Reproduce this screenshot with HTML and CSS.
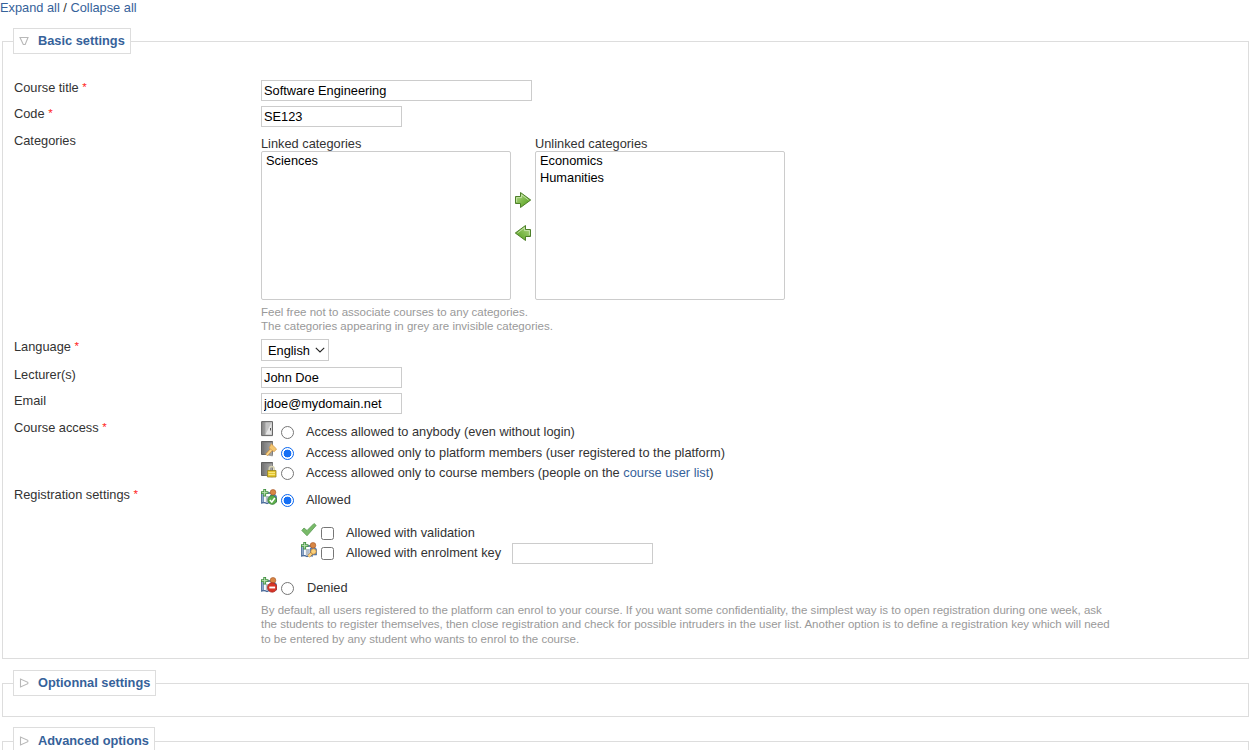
FILE: index.html
```html
<!DOCTYPE html>
<html lang="en">
<head>
<meta charset="utf-8">
<title>Course settings</title>
<link rel="stylesheet" href="styles.css">
</head>
<body>
<svg class="defs" width="0" height="0" aria-hidden="true">
  <defs>
    <linearGradient id="green" x1="0" y1="0" x2="1" y2="1"><stop offset="0" stop-color="#b4d98c"/><stop offset="1" stop-color="#4c9c10"/></linearGradient>
    <linearGradient id="door" x1="0" y1="0" x2="1" y2="0"><stop offset="0" stop-color="#8a8a8a"/><stop offset="1" stop-color="#c4c4c4"/></linearGradient>
    <linearGradient id="cover" x1="0" y1="0" x2="1" y2="0"><stop offset="0" stop-color="#7c7c7c"/><stop offset="1" stop-color="#a8a8a8"/></linearGradient>
    <symbol id="arrow" viewBox="0 0 16 16"><path d="M.5 4.500H5.500V.5L15.700 8 5.500 15.500V11.500H.5z" fill="url(#green)" stroke="#4d7f29"/><path d="M1.600 10V5.600H6.600V2.700L13.500 8" fill="none" stroke="#cfe8b8" stroke-width=".8"/></symbol>
    <symbol id="book" viewBox="0 0 16 16"><path d="M.5.500h11v13H.5z" fill="#777" stroke="#555" stroke-width=".9"/><path d="M2.500 1.200H11.500V15L2.500 13z" fill="url(#cover)" stroke="#777" stroke-width=".5"/></symbol>
    <symbol id="users" viewBox="0 0 16 16"><path d="M.8 4v10q3-1 5.200.5 2-1.500 5-.5V4z" fill="#fff" stroke="#3f6294" stroke-width="1.300"/><path d="M2.300 5.500v7.500" stroke="#7595bf" stroke-width="1.500"/><path d="M4.800 8h3.500M4.800 10h3.500M4.800 12h3.500" stroke="#566c87" stroke-width=".9"/><path d="M9 13V7.500q0-2.300 3-2.300t3.700 2.300V13z" fill="#5680b6" stroke="#385b8c" stroke-width=".5"/><circle cx="12" cy="3.300" r="2.800" fill="#d88643" stroke="#a45427" stroke-width=".6"/><path d="M3.700 0v7.400M0 3.700h7.400" stroke="#3f8f3f" stroke-width="2.800"/><path d="M3.700 .8v5.800M.8 3.700h5.800" stroke="#c2e6b8" stroke-width="1"/></symbol>
  </defs>
</svg>
<div class="toggles"><a>Expand all</a> / <a>Collapse all</a></div>

<fieldset class="panel basic">
  <legend class="legend"><svg class="tri" viewBox="0 0 10 10"><path d="M1 1.500h8L6.200 8.500H4.300z" fill="#fff" stroke="#b8b8b8" stroke-width="1.100"/></svg>Basic settings</legend>
  <div class="row r-title"><label>Course title <b class="req">*</b></label><input class="field wide" value="Software Engineering"></div>
  <div class="row r-code"><label>Code <b class="req">*</b></label><input class="field" value="SE123"></div>
  <div class="row r-cat"><label>Categories</label>
    <div>
      <div class="lists">
        <div><div class="list-title">Linked categories</div><div class="list"><div>Sciences</div></div></div>
        <div class="arrows"><svg class="arrow"><use href="#arrow"/></svg><svg class="arrow left"><use href="#arrow"/></svg></div>
        <div><div class="list-title">Unlinked categories</div><div class="list"><div>Economics</div><div>Humanities</div></div></div>
      </div>
      <div class="help cat-help">Feel free not to associate courses to any categories.<br>The categories appearing in grey are invisible categories.</div>
    </div>
  </div>
  <div class="row r-lang"><label>Language <b class="req">*</b></label>
    <div class="select"><span>English</span><svg width="10" height="6" viewBox="0 0 10 6"><path d="M.8.8 5 5 9.200.8" fill="none" stroke="#222" stroke-width="1.100"/></svg></div></div>
  <div class="row r-lect"><label>Lecturer(s)</label><input class="field" value="John Doe"></div>
  <div class="row r-mail"><label>Email</label><input class="field" value="jdoe@mydomain.net"></div>
  <div class="row r-access"><label>Course access <b class="req">*</b></label>
    <div class="access">
      <div class="opt"><svg class="ico" viewBox="0 0 16 16"><path d="M.6.600h10.900v14H.6z" fill="url(#door)" stroke="#666"/><path d="M4.500 1.500h6v12h-6z" fill="#c4c4c4"/><path d="M10.500 1.500v12h-6z" fill="#e6e6e6"/><path d="M9.500 7v2.500" stroke="#555"/></svg><i class="radio"></i><span>Access allowed to anybody (even without login)</span></div>
      <div class="opt"><svg class="ico" viewBox="0 0 16 16"><use href="#book"/><path d="M5.500 14 11 8" stroke="#c98a35" stroke-width="3.200"/><path d="M5.700 13.800 11 8" stroke="#f8d58b" stroke-width="1.900"/><path d="m10.300 2.800 5.300 5.200-2.500 2.800-5-3.800z" fill="#f4c670" stroke="#cf9548" stroke-width=".7"/></svg><i class="radio on"></i><span>Access allowed only to platform members (user registered to the platform)</span></div>
      <div class="opt"><svg class="ico" viewBox="0 0 16 16"><use href="#book"/><path d="M8.200 9V7q0-2.500 2.500-2.500T13.200 7v2" fill="none" stroke="#d8d3b4" stroke-width="1.500"/><path d="M6.500 8.500h8.500v6.500H6.500z" fill="#e5c62e" stroke="#96811e" stroke-width=".8"/><path d="M7.500 10.500h6.500M7.500 12.500h6.500" stroke="#fbef91" stroke-width=".8"/></svg><i class="radio"></i><span>Access allowed only to course members (people on the <a>course user list</a>)</span></div>
    </div>
  </div>
  <div class="row r-reg"><label>Registration settings <b class="req">*</b></label>
    <div class="reg">
      <div class="opt"><svg class="ico" viewBox="0 0 16 16"><use href="#users"/><circle cx="11.300" cy="11" r="4.400" fill="#5cae4b" stroke="#31792f" stroke-width=".7"/><path d="m8.800 11 2 2 3-4" fill="none" stroke="#fff" stroke-width="1.500"/></svg><i class="radio on"></i><span>Allowed</span></div>
      <div class="suboptions">
        <div class="opt"><svg class="ico" viewBox="0 0 16 16"><path d="m.8 8.500 2.200-2.500 3 2.500L13 1.500l2.200 1.900L6 13.800z" fill="#79ba68" stroke="#5b9a54" stroke-width=".8"/></svg><i class="check"></i><span>Allowed with validation</span></div>
        <div class="opt"><svg class="ico" viewBox="0 0 16 16"><use href="#users"/><path d="m7.500 14.500 4.500-4.500" stroke="#b97824" stroke-width="3"/><path d="m7.500 14.500 4.500-4.500" stroke="#ffd783" stroke-width="1.900"/><circle cx="12.500" cy="9.500" r="2.700" fill="#fbd27e" stroke="#bf8031" stroke-width=".7"/></svg><i class="check"></i><span>Allowed with enrolment key</span><input class="field key" aria-label="Enrolment key"></div>
      </div>
      <div class="opt denied"><svg class="ico" viewBox="0 0 16 16"><use href="#users"/><circle cx="11.200" cy="10.500" r="4.700" fill="#d83527" stroke="#a62620" stroke-width=".7"/><path d="M8.300 10.500h5.800" stroke="#fff" stroke-width="1.900"/></svg><i class="radio"></i><span>Denied</span></div>
      <div class="help reg-help">By default, all users registered to the platform can enrol to your course. If you want some confidentiality, the simplest way is to open registration during one week, ask<br>the students to register themselves, then close registration and check for possible intruders in the user list. Another option is to define a registration key which will need<br>to be entered by any student who wants to enrol to the course.</div>
    </div>
  </div>
</fieldset>

<fieldset class="panel optional">
  <legend class="legend"><svg class="tri" viewBox="0 0 10 10"><path d="M1.500 1v8L8.800 5.700V4.300z" fill="#fff" stroke="#b8b8b8" stroke-width="1.100"/></svg>Optionnal settings</legend>
</fieldset>
<fieldset class="panel advanced">
  <legend class="legend"><svg class="tri" viewBox="0 0 10 10"><path d="M1.500 1v8L8.800 5.700V4.300z" fill="#fff" stroke="#b8b8b8" stroke-width="1.100"/></svg>Advanced options</legend>
</fieldset>
</body>
</html>
```
FILE: styles.css
```css
* { box-sizing: border-box; }
html { overflow: hidden; }
body { margin: 0; height: 750px; overflow: hidden; background: #fff; color: #333; font: 12.800px/16px "Liberation Sans", Arial, sans-serif; }
.defs { display: block; }
a { color: #36629a; }
.toggles { height: 28px; white-space: nowrap; }
.panel { margin: 0 2px; padding: 0 11px; border: 1px solid #ddd; min-width: 0; }
.basic { height: 631px; padding-top: 26px; }
.optional { height: 47px; margin-top: 11px; }
.advanced { height: 60px; margin-top: 10px; }
.legend { display: flex; align-items: center; height: 26px; margin-left: -1px; padding: 0 5px 0 5px; border: 1px solid #ddd; font-weight: bold; color: #36629a; white-space: nowrap; }
.advanced .legend { height: 28px; }
.tri { flex: none; width: 10px; height: 10px; margin-right: 9px; }
.row { display: grid; grid-template-columns: 247px 1fr; align-items: start; }
.r-title, .r-lect { height: 26px; }
.r-code, .r-mail { height: 27px; }
.r-cat { height: 206px; }
.r-lang { height: 28px; }
.r-access { height: 67px; }
.r-reg { height: 165px; }
.req { color: #f22; font-size: 11.520px; line-height: 1; font-weight: normal; vertical-align: 1px; }
.field { display: block; width: 141px; height: 21px; margin: 0; padding: 0 2px; border: 1px solid #ccc; background: #fff; color: #000; font: inherit; outline: 0; }
.wide { width: 271px; }
.lists { display: flex; padding-top: 3px; }
.list-title { height: 15px; }
.list { width: 250px; height: 149px; padding: 0 4px; border: 1px solid #ccc; border-radius: 2px; color: #000; line-height: 17px; }
.arrows { display: flex; flex-direction: column; gap: 17px; width: 24px; padding: 56px 4px 0; }
.arrow { width: 16px; height: 16px; }
.left { transform: scaleX(-1); }
.help { color: #999; font-size: 11.520px; line-height: 14.400px; white-space: nowrap; }
.cat-help { padding-top: 5px; }
.select { display: flex; align-items: center; gap: 5px; width: 68px; height: 22px; padding: 1px 0 0 6px; border: 1px solid #ccc; color: #000; }
.select svg { margin-top: -2px; }
.opt { display: flex; height: 20px; align-items: center; white-space: nowrap; }
.ico { flex: none; width: 16px; height: 16px; margin-bottom: 7px; }
.radio, .check { flex: none; width: 13px; height: 13px; margin: 1px 11px 0 4px; border: 1px solid #767676; background: #fff; }
.radio { border-radius: 50%; }
.check { border-radius: 2.500px; }
.on { border-color: #0a66ee; background: radial-gradient(circle, #1670f5 0 3.600px, #fff 4.200px); }
.access { padding-top: 2px; }
.access .opt { height: 20.500px; }
.opt > span { margin-left: 1px; }
.reg { padding-top: 3px; }
.suboptions { padding: 13px 0 0 40px; }
.key { margin-left: 11px; }
.denied { margin-top: 15px; }
.denied > span { margin-left: 2px; }
.reg-help { padding-top: 5px; }
```
